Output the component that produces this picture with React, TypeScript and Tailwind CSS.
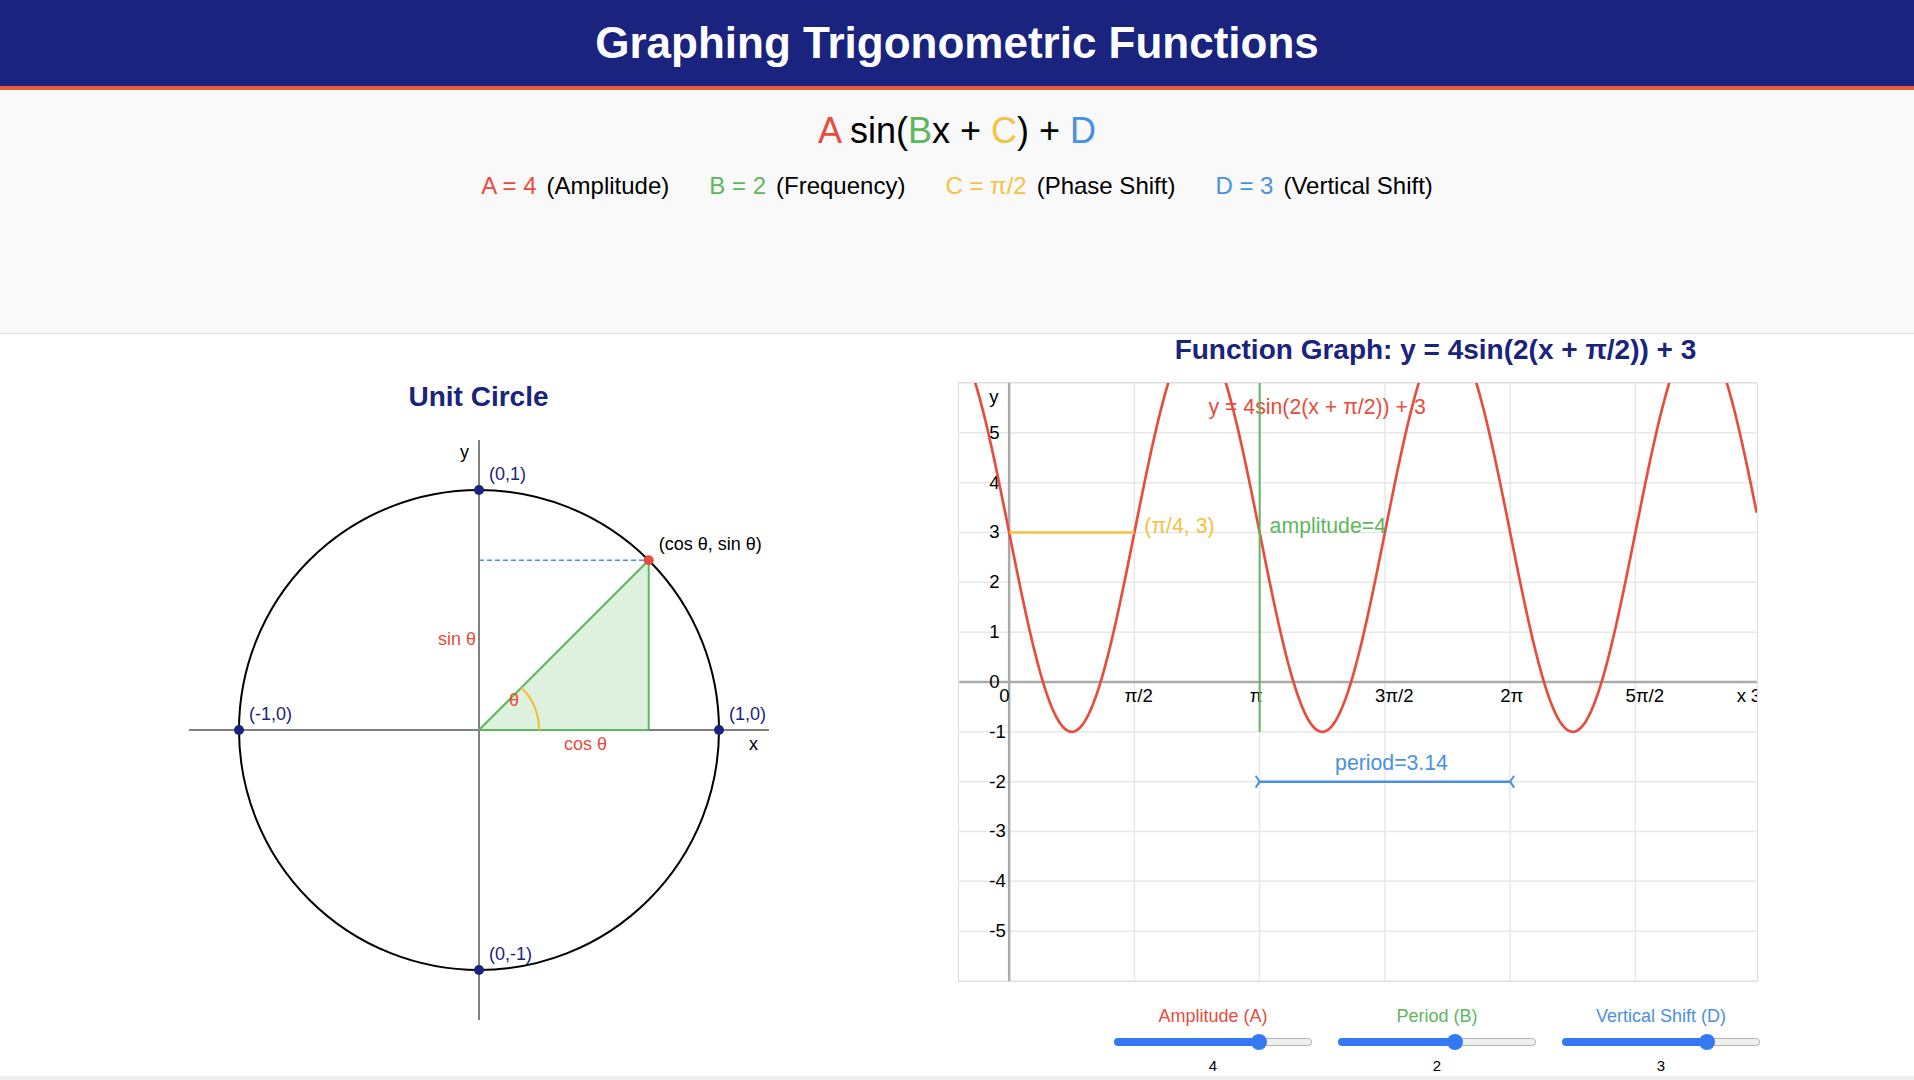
import React from "react";

const RED = "#e74c3c";
const GREEN = "#5cb85c";
const YELLOW = "#f5c242";
const BLUE = "#4a90e2";
const NAVY = "#1a237e";

function UnitCircle() {
  const cx = 300;
  const cy = 300;
  const r = 240;
  const th = Math.PI / 4;
  const px = cx + r * Math.cos(th);
  const py = cy - r * Math.sin(th);
  const ar = 60;
  const ax = cx + ar * Math.cos(th);
  const ay = cy - ar * Math.sin(th);
  const pts: [number, number, string][] = [
    [cx, cy - r, "(0,1)"],
    [cx + r, cy, "(1,0)"],
    [cx - r, cy, "(-1,0)"],
    [cx, cy + r, "(0,-1)"],
  ];
  return (
    <svg width={600} height={600} viewBox="0 0 600 600" className="block">
      <line x1={10} y1={cy} x2={590} y2={cy} stroke="#808080" strokeWidth={2} />
      <line x1={cx} y1={10} x2={cx} y2={590} stroke="#808080" strokeWidth={2} />
      <text x={570} y={320} fontSize={18} fill="#000">x</text>
      <text x={281} y={28} fontSize={18} fill="#000">y</text>
      <circle cx={cx} cy={cy} r={r} fill="none" stroke="#000" strokeWidth={2} />
      <path d={`M ${cx} ${cy} L ${px} ${cy} L ${px} ${py} Z`} fill="rgba(92,184,92,0.2)" stroke="none" />
      <line x1={cx} y1={cy} x2={px} y2={py} stroke={GREEN} strokeWidth={2} />
      <line x1={px} y1={cy} x2={px} y2={py} stroke={GREEN} strokeWidth={2} />
      <line x1={cx} y1={cy} x2={px} y2={cy} stroke={GREEN} strokeWidth={2} />
      <line x1={cx} y1={py} x2={px} y2={py} stroke={BLUE} strokeWidth={1.5} strokeDasharray="5 3" />
      <path d={`M ${cx + ar} ${cy} A ${ar} ${ar} 0 0 0 ${ax} ${ay}`} fill="none" stroke="#f0c030" strokeWidth={2} />
      <text x={330} y={276} fontSize={18} fill={RED}>θ</text>
      <text x={297} y={215} fontSize={18} fill={RED} textAnchor="end">sin θ</text>
      <text x={385} y={320} fontSize={18} fill={RED}>cos θ</text>
      {pts.map(([x, y, l]) => (
        <g key={l}>
          <circle cx={x} cy={y} r={5} fill={NAVY} />
          <text x={x + 10} y={y - 10} fontSize={18} fill={NAVY}>{l}</text>
        </g>
      ))}
      <circle cx={px} cy={py} r={5} fill={RED} />
      <text x={px + 10} y={py - 10} fontSize={18} fill="#000">(cos θ, sin θ)</text>
    </svg>
  );
}

function Graph() {
  const X0 = 50;
  const Y0 = 300;
  const SX = 80;
  const SY = 50;
  const f = (x: number) => 4 * Math.sin(2 * (x + Math.PI / 2)) + 3;
  let d = "";
  for (let p = 0; p <= 800; p += 2) {
    const x = (p - X0) / SX;
    const y = Y0 - SY * f(x);
    d += (p === 0 ? "M " : " L ") + p + " " + y.toFixed(2);
  }
  const xl = ["0", "π/2", "π", "3π/2", "2π", "5π/2", "3π"];
  const yv = [5, 4, 3, 2, 1, 0, -1, -2, -3, -4, -5];
  const hGrid = Array.from({ length: 13 }, (_, i) => i * 50);
  const gx = (k: number) => X0 + (k * Math.PI * SX) / 2;
  const piX = X0 + Math.PI * SX;
  const twoPiX = X0 + 2 * Math.PI * SX;
  const phX = X0 + (Math.PI / 2) * SX;
  return (
    <svg width={800} height={600} viewBox="0 0 800 600" className="block border border-[#dddddd] bg-white">
      {hGrid.map((y) => (
        <line key={"h" + y} x1={0} y1={y} x2={800} y2={y} stroke="#e8e8e8" strokeWidth={1.5} />
      ))}
      {xl.map((_, k) => (
        <line key={"v" + k} x1={gx(k)} y1={0} x2={gx(k)} y2={600} stroke="#e8e8e8" strokeWidth={1.5} />
      ))}
      <line x1={0} y1={Y0} x2={800} y2={Y0} stroke="#aaaaaa" strokeWidth={2.5} />
      <line x1={X0} y1={0} x2={X0} y2={600} stroke="#aaaaaa" strokeWidth={2.5} />
      {xl.map((l, k) => (
        <text key={"xl" + k} x={gx(k) - 10} y={320} fontSize={18.67} fill="#000">{l}</text>
      ))}
      {yv.map((v) => (
        <text key={"yl" + v} x={30} y={Y0 - v * SY + 6} fontSize={18.67} fill="#000">{v}</text>
      ))}
      <text x={30} y={20} fontSize={18.67} fill="#000">y</text>
      <text x={780} y={320} fontSize={18.67} fill="#000">x</text>
      <path d={d} fill="none" stroke={RED} strokeWidth={2.67} />
      <text x={250} y={31} fontSize={21.33} fill={RED}>y = 4sin(2(x + π/2)) + 3</text>
      <line x1={X0} y1={150} x2={phX} y2={150} stroke={YELLOW} strokeWidth={2.5} />
      <text x={phX + 10} y={150} fontSize={21.33} fill={YELLOW}>(π/4, 3)</text>
      <line x1={piX} y1={-50} x2={piX} y2={350} stroke={GREEN} strokeWidth={2} />
      <text x={piX + 10} y={150} fontSize={21.33} fill={GREEN}>amplitude=4</text>
      <line x1={piX} y1={400} x2={twoPiX} y2={400} stroke={BLUE} strokeWidth={2.5} />
      <path d={`M ${piX - 4} 394 L ${piX} 400 L ${piX - 4} 406`} fill="none" stroke={BLUE} strokeWidth={2} />
      <path d={`M ${twoPiX + 4} 394 L ${twoPiX} 400 L ${twoPiX + 4} 406`} fill="none" stroke={BLUE} strokeWidth={2} />
      <text x={377} y={388} fontSize={21.33} fill={BLUE}>period=3.14</text>
    </svg>
  );
}

function Slider({ label, labelClass, value, frac }: { label: string; labelClass: string; value: string; frac: number }) {
  const travel = 182;
  return (
    <div className="flex w-[198px] flex-col items-center">
      <div className={"text-[18px] leading-[21px] " + labelClass}>{label}</div>
      <div className="relative mt-[7px] h-[16px] w-full">
        <div className="absolute left-0 right-0 top-[4px] h-[8px] rounded-full border border-[#b5b5b5] bg-[#efefef]" />
        <div className="absolute left-0 top-[4px] h-[8px] rounded-full bg-[#3478f6]" style={{ width: 8 + frac * travel }} />
        <div className="absolute top-0 h-[16px] w-[16px] rounded-full bg-[#3478f6]" style={{ left: frac * travel }} />
      </div>
      <div className="mt-[7px] text-[15px] leading-[17px] text-black">{value}</div>
    </div>
  );
}

export default function App() {
  return (
    <div className="min-h-screen bg-[#eeeeee] font-['Liberation_Sans',Arial,Helvetica,sans-serif]">
      <header className="flex h-[90px] items-center justify-center border-b-4 border-[#ee5c35] bg-[#1a237e]">
        <h1 className="mb-[2px] text-[44px] font-bold leading-[51px] text-white">Graphing Trigonometric Functions</h1>
      </header>
      <section className="h-[244px] border-b border-[#e0e0e0] bg-[#f9f9f9] pt-[20px]">
        <div className="text-center text-[36px] leading-[41px] text-black">
          <span className="text-[#e74c3c]">A</span> sin(<span className="text-[#5cb85c]">B</span>x +{" "}
          <span className="text-[#f5c242]">C</span>) + <span className="text-[#4a90e2]">D</span>
        </div>
        <div className="mt-[21px] flex justify-center gap-[40px] text-[24px] leading-[28px] text-black">
          <div>
            <span className="text-[#e74c3c]">A = 4</span>
            <span className="ml-[10px]">(Amplitude)</span>
          </div>
          <div>
            <span className="text-[#5cb85c]">B = 2</span>
            <span className="ml-[10px]">(Frequency)</span>
          </div>
          <div>
            <span className="text-[#f5c242]">C = π/2</span>
            <span className="ml-[10px]">(Phase Shift)</span>
          </div>
          <div>
            <span className="text-[#4a90e2]">D = 3</span>
            <span className="ml-[10px]">(Vertical Shift)</span>
          </div>
        </div>
      </section>
      <main className="grid grid-cols-2 items-center bg-white pb-[2px]">
        <div className="flex flex-col items-center pt-[3px]">
          <h2 className="mb-[17px] text-[28px] font-bold leading-[32px] text-[#1a237e]">Unit Circle</h2>
          <UnitCircle />
        </div>
        <div className="flex flex-col">
          <h2 className="mb-4 text-center text-[28px] font-bold leading-[32px] text-[#1a237e]">
            Function Graph: y = 4sin(2(x + π/2)) + 3
          </h2>
          <div className="ml-px w-[802px]">
            <Graph />
            <div className="mt-[24px] flex justify-end gap-[26px]">
              <Slider label="Amplitude (A)" labelClass="text-[#e74c3c]" value="4" frac={0.75} />
              <Slider label="Period (B)" labelClass="text-[#5cb85c]" value="2" frac={0.6} />
              <Slider label="Vertical Shift (D)" labelClass="text-[#4a90e2]" value="3" frac={0.75} />
            </div>
          </div>
        </div>
      </main>
    </div>
  );
}
